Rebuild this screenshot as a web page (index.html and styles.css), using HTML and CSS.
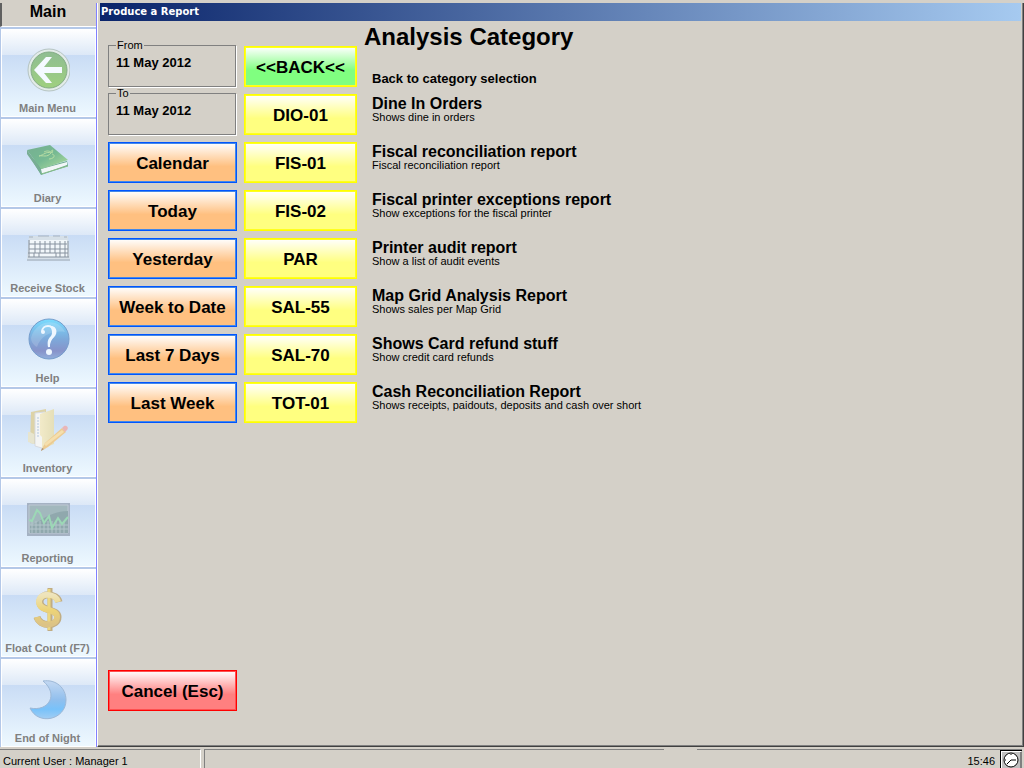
FILE: index.html
```html
<!DOCTYPE html>
<html lang="en">
<head>
    <meta charset="UTF-8">
    <meta name="viewport" content="width=device-width, initial-scale=1.0">
    <title>Produce a Report</title>
    <link rel="stylesheet" href="styles.css">
</head>
<body>
    <div class="workspace">
        <nav class="sidebar">
            <h2 class="sidebar-title">Main</h2>
            <button type="button" class="tile">
                <svg class="tile-icon" viewBox="0 0 44 44">
                    <defs>
                        <linearGradient id="green" x1="0" y1="0" x2="0" y2="1">
                            <stop offset="0" stop-color="#8fbd92"/>
                            <stop offset="1" stop-color="#9fd080"/>
                        </linearGradient>
                    </defs>
                    <circle cx="23" cy="22" r="21" fill="#e3ece9" stroke="#b5c4c2"/>
                    <circle cx="23" cy="22" r="18" fill="url(#green)" stroke="#85ad86"/>
                    <path d="M8 22 20 9h6l-8 10h18v6H18l8 10h-6Z" fill="#f5faff"/>
                </svg>
                <span>Main Menu</span>
            </button>
            <button type="button" class="tile">
                <svg class="tile-icon" viewBox="0 0 44 44">
                    <defs>
                        <linearGradient id="book" x1="0" y1="0" x2="1" y2="1">
                            <stop offset="0" stop-color="#76af91"/>
                            <stop offset=".5" stop-color="#76b993"/>
                            <stop offset="1" stop-color="#b3df9c"/>
                        </linearGradient>
                    </defs>
                    <path d="M1 14 15 37 42 28 41 23 16 30Z" fill="#6aaa8c"/>
                    <path d="M15 31 41 24v3L16 36Z" fill="#f2f6f8"/>
                    <path d="M1 12 24 7 42 22 15 31Z" fill="url(#book)"/>
                    <path d="M1 12 15 31v5L1 16Z" fill="#78ad94"/>
                    <path d="M15 36 42 28" stroke="#87bd88" fill="none"/>
                    <path d="M13 18c5-1 7-5 12-3-4 5-8 2-12 3m13-3c-3-3-6-2-8-1m8 1c2-4-1-4 0-1m0 2c4 1 2 5-3 5" fill="none" stroke="#b7dda4"/>
                </svg>
                <span>Diary</span>
            </button>
            <button type="button" class="tile">
                <svg class="tile-icon" viewBox="0 0 44 44">
                    <path d="M3 8h39l2 23H1Z" fill="#d6e0e8"/>
                    <path d="M1 31h43v2H1Z" fill="#b7c4d2"/>
                    <path d="M3 9h4m5-1h11m4 0h7m4 1h3" stroke="#a6b2bf" fill="none"/>
                    <path d="M4 12h37l2 17H2Z" fill="#f2f7fa"/>
                    <path d="M3 12v17m6-16v12m5-12v12m5-12v12m5-12v12m5-12v12m5-12v16m5-16v16m3-16v16M3 16h38M3 21h39M2 25h40M2 29h41M8 25v4m5-4v4m17-4v4" stroke="#87929f" fill="none"/>
                </svg>
                <span>Receive Stock</span>
            </button>
            <button type="button" class="tile">
                <svg class="tile-icon" viewBox="0 0 44 44">
                    <defs>
                        <linearGradient id="globe" x1="0" y1="0" x2="0" y2="1">
                            <stop offset="0" stop-color="#79dcff"/>
                            <stop offset=".5" stop-color="#7da9da"/>
                            <stop offset=".8" stop-color="#8793ca"/>
                            <stop offset="1" stop-color="#91b0dc"/>
                        </linearGradient>
                    </defs>
                    <circle cx="23" cy="21" r="20" fill="url(#globe)" stroke="#769dcc"/>
                    <path d="M5 20C9 3 31-2 39 14 27 12 15 17 11 29 7 27 5 23 5 20Z" fill="#fff" opacity=".16"/>
                    <path d="M16 14C16 6 28 6 28 14c0 6-6 8-5 15" fill="none" stroke="#eef7ff" stroke-width="2"/>
                    <path d="M22 8c10-2 11 9 4 13-2 2-2 4-2 8h-2c-1-6 0-8 3-11 2-3 1-9-3-10Z" fill="#eef7ff"/>
                    <circle cx="17" cy="14" r="2" fill="#eef7ff"/>
                    <circle cx="23" cy="34" r="3" fill="#eef7ff"/>
                </svg>
                <span>Help</span>
            </button>
            <button type="button" class="tile">
                <svg class="tile-icon" viewBox="0 0 44 44">
                    <defs>
                        <linearGradient id="folder" x1="0" y1="0" x2="1" y2="0">
                            <stop offset="0" stop-color="#f2eac9"/>
                            <stop offset="1" stop-color="#e5dfb8"/>
                        </linearGradient>
                    </defs>
                    <path d="M5 4 20 1v37L4 35Z" fill="#ddd3a8"/>
                    <path d="M4 24H2v10l6 2V26Z" fill="#e7e5cf"/>
                    <path d="m9 5 10-1v37L9 38Z" fill="#f4f5f4" stroke="#d7dbe0"/>
                    <path d="M11 10h2m-2 3h2m-2 3h2m-2 3h2m-2 3h2m-2 3h2m-2 3h2" stroke="#b3c7df"/>
                    <path d="m14 6 14-5v35l-12 5v-12l-2-2Z" fill="url(#folder)"/>
                    <path d="M15 43 19 35 36 20l4 4-18 15Z" fill="#eccb92"/>
                    <path d="m18 36 18-14 2 2-18 14Z" fill="#f5dfad"/>
                    <path d="m36 20 2-2c3-1 5 2 3 4l-2 2Z" fill="#e9b6b8"/>
                    <path d="m15 43 1-3 2 1Z" fill="#a99078"/>
                </svg>
                <span>Inventory</span>
            </button>
            <button type="button" class="tile">
                <svg class="tile-icon" viewBox="0 0 44 44">
                    <path d="M1 5h43v33H1Z" fill="#a5b2c3"/>
                    <path d="M3 7h39v28H3Z" fill="#a2b8bd" stroke="#bdc8d3"/>
                    <path d="M4 27C13 26 20 14 42 13v22H4Z" fill="#90a8ad"/>
                    <path d="M4 27h38M4 31h38M6 23v12m4-12v12m4-12v12m4-12v12m4-12v12m4-12v12m4-12v12m4-12v12m4-12v12" stroke="#b3c5cb" fill="none"/>
                    <path d="m3 22 3 1 5-11 3 3 4 10 5-7 3 12 6-10 4 6 6-7" fill="none" stroke="#9cd8b6" stroke-width="2"/>
                </svg>
                <span>Reporting</span>
            </button>
            <button type="button" class="tile">
                <svg class="tile-icon" viewBox="0 0 44 44">
                    <defs>
                        <linearGradient id="gold" x1="0" y1="0" x2="0" y2="1">
                            <stop offset="0" stop-color="#eee4bc"/>
                            <stop offset=".5" stop-color="#edd477"/>
                            <stop offset="1" stop-color="#dcc386"/>
                        </linearGradient>
                    </defs>
                    <g fill="none" stroke="#c1ad83">
                        <path d="M24 0v43" stroke-width="5"/>
                        <path d="M33 14C31 5 14 4 14 14c0 10 18 6 18 15 0 10-18 10-21 0" stroke-width="7"/>
                    </g>
                    <g fill="none" stroke="#edd880">
                        <path d="M23 1v41" stroke-width="3"/>
                        <path d="M32 14C30 5 13 4 13 14c0 10 18 6 18 15 0 10-18 10-20 0" stroke="url(#gold)" stroke-width="6"/>
                    </g>
                </svg>
                <span>Float Count (F7)</span>
            </button>
            <button type="button" class="tile">
                <svg class="tile-icon" viewBox="0 0 44 44">
                    <defs>
                        <linearGradient id="moon" x1="0" y1="0" x2="0" y2="1">
                            <stop offset="0" stop-color="#c3d8f2"/>
                            <stop offset=".5" stop-color="#91bfed"/>
                            <stop offset=".75" stop-color="#78c2fa"/>
                            <stop offset="1" stop-color="#a1cdf3"/>
                        </linearGradient>
                    </defs>
                    <path d="M17 3C30 1 40 10 40 22c0 20-28 26-36 8 19 4 29-14 13-27Z" fill="url(#moon)" stroke="#9cb8d7"/>
                </svg>
                <span>End of Night</span>
            </button>
        </nav>

        <main class="window">
            <header class="titlebar">Produce a Report</header>
            <div class="content">
                <div class="periods">
                    <div class="dates">
                        <fieldset class="date-box">
                            <legend>From</legend>
                            11 May 2012
                        </fieldset>
                        <fieldset class="date-box">
                            <legend>To</legend>
                            11 May 2012
                        </fieldset>
                    </div>
                    <button type="button" class="btn btn-period">Calendar</button>
                    <button type="button" class="btn btn-period">Today</button>
                    <button type="button" class="btn btn-period">Yesterday</button>
                    <button type="button" class="btn btn-period">Week to Date</button>
                    <button type="button" class="btn btn-period">Last 7 Days</button>
                    <button type="button" class="btn btn-period">Last Week</button>
                    <button type="button" class="btn btn-cancel">Cancel (Esc)</button>
                </div>

                <div class="codes">
                    <button type="button" class="btn btn-back">&lt;&lt;BACK&lt;&lt;</button>
                    <button type="button" class="btn btn-report">DIO-01</button>
                    <button type="button" class="btn btn-report">FIS-01</button>
                    <button type="button" class="btn btn-report">FIS-02</button>
                    <button type="button" class="btn btn-report">PAR</button>
                    <button type="button" class="btn btn-report">SAL-55</button>
                    <button type="button" class="btn btn-report">SAL-70</button>
                    <button type="button" class="btn btn-report">TOT-01</button>
                </div>

                <section class="reports">
                    <h1>Analysis Category</h1>
                    <p class="back-text">Back to category selection</p>
                    <div class="report">
                        <h3>Dine In Orders</h3>
                        <p>Shows dine in orders</p>
                    </div>
                    <div class="report">
                        <h3>Fiscal reconciliation report</h3>
                        <p>Fiscal reconciliation report</p>
                    </div>
                    <div class="report">
                        <h3>Fiscal printer exceptions report</h3>
                        <p>Show exceptions for the fiscal printer</p>
                    </div>
                    <div class="report">
                        <h3>Printer audit report</h3>
                        <p>Show a list of audit events</p>
                    </div>
                    <div class="report">
                        <h3>Map Grid Analysis Report</h3>
                        <p>Shows sales per Map Grid</p>
                    </div>
                    <div class="report">
                        <h3>Shows Card refund stuff</h3>
                        <p>Show credit card refunds</p>
                    </div>
                    <div class="report">
                        <h3>Cash Reconciliation Report</h3>
                        <p>Shows receipts, paidouts, deposits and cash over short</p>
                    </div>
                </section>
            </div>
        </main>
    </div>

    <footer class="statusbar">
        <div class="status-user">Current User : Manager 1</div>
        <div class="status-message"></div>
        <div class="status-time">
            <span>15:46</span>
            <svg class="clock" viewBox="0 0 22 18">
                <path d="M0 0h22v18H0Z" fill="#c0c0c0"/>
                <path d="M20 2h2v16h-2Z" fill="#808080"/>
                <path d="M0 18V0h22v1H1v17Z" fill="#000"/>
                <path d="M1 18V1h20v1H2v16Z" fill="#fff"/>
                <circle cx="11" cy="10" r="7" fill="#fff" stroke="#000"/>
                <path d="m7 14 4-4h5M11 4v1M5 10h1" stroke="#000" fill="none"/>
            </svg>
        </div>
    </footer>
</body>
</html>
```
FILE: styles.css
```css
* {
    box-sizing: border-box;
}
body {
    margin: 0;
    height: 100vh;
    display: flex;
    flex-direction: column;
    background-color: #d4d0c8;
    color: #000;
    font-family: "Liberation Sans", Arial, sans-serif;
    font-size: 11px;
}
h1, h2, h3, p {
    margin: 0;
}
button {
    font-family: inherit;
    padding: 0;
    cursor: pointer;
}
.workspace {
    flex: 1;
    display: flex;
    min-height: 0;
    padding-top: 3px;
}

/* left menu */
.sidebar {
    width: 97px;
    display: flex;
    flex-direction: column;
    border-right: 1px solid #8080ff;
}
.sidebar-title {
    height: 24px;
    padding-right: 2px;
    border-left: 2px solid #606060;
    border-bottom: 1px solid #fff;
    font-size: 16px;
    line-height: 18px;
    text-align: center;
}
.tile {
    flex: 1;
    display: flex;
    flex-direction: column;
    align-items: center;
    justify-content: flex-end;
    gap: 9px;
    padding: 0 2px 2px 0;
    border: 0;
    border-top: 2px solid #b4c8e8;
    border-left: 1px solid #b4c8e8;
    background: linear-gradient(#fff, #dce8f7 30%, #c9dcf5 30%, #eef9ff);
    box-shadow: inset 1px 1px #fff, inset -1px -1px #fff;
    color: #808080;
    font-size: 11px;
    font-weight: bold;
    line-height: 14px;
    white-space: nowrap;
}
.tile-icon {
    width: 44px;
    height: 44px;
}

/* report window */
.window {
    flex: 1;
    display: flex;
    flex-direction: column;
    border-left: 1px solid #fff;
    border-right: 1px solid #404040;
    border-bottom: 1px solid #404040;
    box-shadow: inset -1px -1px #808080;
    padding: 0 2px;
}
.titlebar {
    height: 18px;
    padding-left: 1px;
    background: linear-gradient(to right, #0a246a, #a6caf0);
    color: #fff;
    font-family: "DejaVu Sans", Verdana, sans-serif;
    font-size: 10px;
    font-weight: bold;
    line-height: 18px;
}
.content {
    flex: 1;
    display: flex;
    padding: 0 8px 35px;
}
.periods, .codes {
    display: flex;
    flex-direction: column;
    gap: 7px;
}
.periods {
    width: 129px;
    margin-right: 7px;
    padding-top: 18px;
}
.codes {
    width: 113px;
    margin-right: 7px;
    padding-top: 25px;
}
.date-box {
    height: 48px;
    margin: 0 1px 0 0;
    padding: 0 7px;
    border: 1px solid #808080;
    box-shadow: 1px 1px #fff;
    font-size: 13px;
    font-weight: bold;
    line-height: 24px;
}
.date-box legend {
    padding: 0 1px;
    font-size: 11px;
    font-weight: normal;
    line-height: 12px;
}
.btn {
    height: 41px;
    padding-top: 2px;
    border: 1px solid;
    color: #000;
    font-size: 17px;
    font-weight: bold;
}
.btn-period {
    border-color: #0055ff;
    box-shadow: inset 0 0 0 1px #4488e8;
    background: linear-gradient(#fff, #ffc080 60%);
}
.btn-cancel {
    margin-top: auto;
    border-color: #ff0000;
    box-shadow: inset 0 0 0 1px #ff5050;
    background: linear-gradient(#fff, #ff8080 60%);
}
.btn-back {
    border-color: #ffff00;
    box-shadow: inset 0 0 0 1px #ffff20;
    background: linear-gradient(#fff, #80ff80 60%);
}
.btn-report {
    border-color: #ffff00;
    box-shadow: inset 0 0 0 1px #ffff20;
    background: linear-gradient(#fff, #ffff80 60%);
}

.reports h1 {
    font-size: 24px;
    line-height: 32px;
}
.back-text {
    height: 43px;
    padding: 17px 8px 0;
    font-size: 13px;
    font-weight: bold;
    line-height: 18px;
}
.report {
    height: 48px;
    padding-left: 8px;
}
.report h3 {
    font-size: 16px;
    line-height: 16px;
}
.report p {
    line-height: 10px;
}

/* status bar */
.statusbar {
    height: 21px;
    display: flex;
    padding-top: 2px;
    line-height: 22px;
}
.status-user {
    width: 201px;
    padding-left: 3px;
    border-top: 1px solid #808080;
    border-right: 1px solid #fff;
}
.status-message {
    flex: 1;
    margin: 0 33px 0 3px;
    border-top: 1px solid #808080;
    border-left: 1px solid #808080;
}
.status-time {
    width: 325px;
    display: flex;
    justify-content: flex-end;
    gap: 5px;
    margin-right: 2px;
    border-top: 1px solid #808080;
}
.clock {
    width: 22px;
    height: 18px;
}
```
